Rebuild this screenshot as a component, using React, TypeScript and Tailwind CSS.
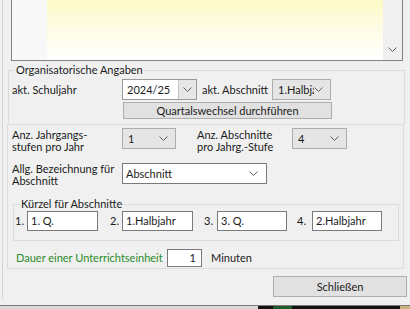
import React from "react";

function Chevron() {
  return (
    <svg width="9" height="5" viewBox="0 0 9 5" className="block shrink-0">
      <polyline points="0.5,0.5 4.5,4.5 8.5,0.5" fill="none" stroke="#5f5f5f" strokeWidth="1" />
    </svg>
  );
}

function GrayCombo({ text, w }: { text: string; w: string }) {
  return (
    <div className={`${w} h-[21px] bg-[#e5e5e5] border border-[#adadad] flex items-center pl-[5px] pr-[7px] overflow-hidden`}>
      <span className="flex-1 overflow-hidden whitespace-nowrap leading-[14px]">{text}</span>
      <Chevron />
    </div>
  );
}

function TextBox({ text, w }: { text: string; w: string }) {
  return (
    <div className={`${w} h-[20px] bg-white border border-[#7a7a7a] flex items-center pl-[3px] whitespace-nowrap`}>
      {text}
    </div>
  );
}

export default function App() {
  return (
    <div className="w-[410px] h-[309px] bg-[#f0f0f0] flex flex-col overflow-hidden font-['Lato',sans-serif] text-[11px] leading-[12px] text-[#1b1b1b]">
      <div className="h-[305px] flex">
        <div className="w-[3px] h-[299px] border-r border-[#d4d4d4]" />
        <div className="flex flex-col w-[407px]">
          {/* memo box */}
          <div className="ml-[8px] w-[392px] h-[61px] border-x border-b border-[#828282] flex">
            <div className="w-[35px] bg-[#f8f8f8]" />
            <div className="flex-1 bg-gradient-to-b from-[#fdf9c6] via-[#fefce6] to-[#ffffff]" />
            <div className="w-[19px] bg-[#f0f0f0] flex items-end justify-center pb-[8px]">
              <Chevron />
            </div>
          </div>

          {/* Organisatorische Angaben */}
          <div className="mt-[9px] ml-[5px] w-[397px] h-[54px] border-t border-x border-[#dcdcdc] relative pl-[3px]">
            <div className="absolute -top-[7px] left-[6px] px-[1px] bg-[#f0f0f0] whitespace-nowrap">Organisatorische Angaben</div>
            <div className="mt-[8px] flex items-center h-[21px]">
              <span className="w-[110px]">akt. Schuljahr</span>
              <div className="w-[75px] h-[21px] bg-white border border-[#9a9a9a] flex items-center pl-[4px]">
                <span className="flex-1">2024/25</span>
                <div className="w-[18px] h-[19px] bg-[#e6e6e6] border-l border-[#c4c4c4] flex items-center justify-center">
                  <Chevron />
                </div>
              </div>
              <span className="ml-[5px] w-[70px] whitespace-nowrap">akt. Abschnitt</span>
              <GrayCombo text="1.Halbjahr" w="w-[59px]" />
            </div>
            <div className="mt-[2px] ml-[111px] w-[209px] h-[17px] bg-[#e1e1e1] border border-[#adadad] flex items-center justify-center">
              Quartalswechsel durchführen
            </div>
          </div>

          {/* second group */}
          <div className="ml-[4px] w-[397px] h-[145px] border border-[#dcdcdc] flex flex-col">
            <div className="mt-[3px] pl-[4px] flex items-start">
              <div className="w-[110px] mt-[1px]">
                <div>Anz. Jahrgangs-</div>
                <div>stufen pro Jahr</div>
              </div>
              <GrayCombo text="1" w="w-[54px]" />
              <div className="ml-[21px] w-[95px] mt-[1px]">
                <div>Anz. Abschnitte</div>
                <div>pro Jahrg.-Stufe</div>
              </div>
              <GrayCombo text="4" w="w-[55px]" />
            </div>
            <div className="mt-[10px] pl-[4px] flex items-start">
              <div className="w-[110px]">
                <div>Allg. Bezeichnung für</div>
                <div>Abschnitt</div>
              </div>
              <div className="w-[145px] h-[21px] bg-white border border-[#7a7a7a] flex items-center pl-[3px] pr-[8px]">
                <span className="flex-1">Abschnitt</span>
                <Chevron />
              </div>
            </div>

            {/* Kürzel */}
            <div className="mt-[17px] ml-[5px] w-[386px] h-[37px] border border-[#dcdcdc] relative">
              <div className="absolute -top-[7px] left-[6px] px-[1px] bg-[#f0f0f0] whitespace-nowrap">Kürzel für Abschnitte</div>
              <div className="mt-[6px] pl-[1px] flex items-center">
                <span className="w-[12px]">1.</span>
                <TextBox text="1. Q." w="w-[71px]" />
                <span className="ml-[12px] w-[12px]">2.</span>
                <TextBox text="1.Halbjahr" w="w-[71px]" />
                <span className="ml-[11px] w-[13px]">3.</span>
                <TextBox text="3. Q." w="w-[70px]" />
                <span className="ml-[10px] w-[15px]">4.</span>
                <TextBox text="2.Halbjahr" w="w-[70px]" />
              </div>
            </div>

            <div className="mt-[8px] pl-[8px] flex items-center">
              <span className="w-[151px] text-[#2a8c2a] whitespace-nowrap">Dauer einer Unterrichtseinheit</span>
              <div className="w-[35px] h-[18px] bg-white border border-[#7a7a7a] flex items-center justify-end pr-[5px]">1</div>
              <span className="ml-[9px]">Minuten</span>
            </div>
          </div>

          <div className="mt-[7px] ml-[270px] w-[134px] h-[21px] bg-[#e1e1e1] border border-[#adadad] flex items-center justify-center">
            Schließen
          </div>
        </div>
      </div>
      <div className="h-[1px] bg-[#7a7a7a]" />
      <div className="h-[3px] flex">
        <div className="w-[258px] bg-[#d9d9d9]" />
        <div className="w-[15px] bg-[#121212]" />
        <div className="w-[19px] bg-[#1f5a2a]" />
        <div className="w-[108px] bg-[#121212]" />
        <div className="flex-1 bg-[#c9b27c]" />
      </div>
    </div>
  );
}
